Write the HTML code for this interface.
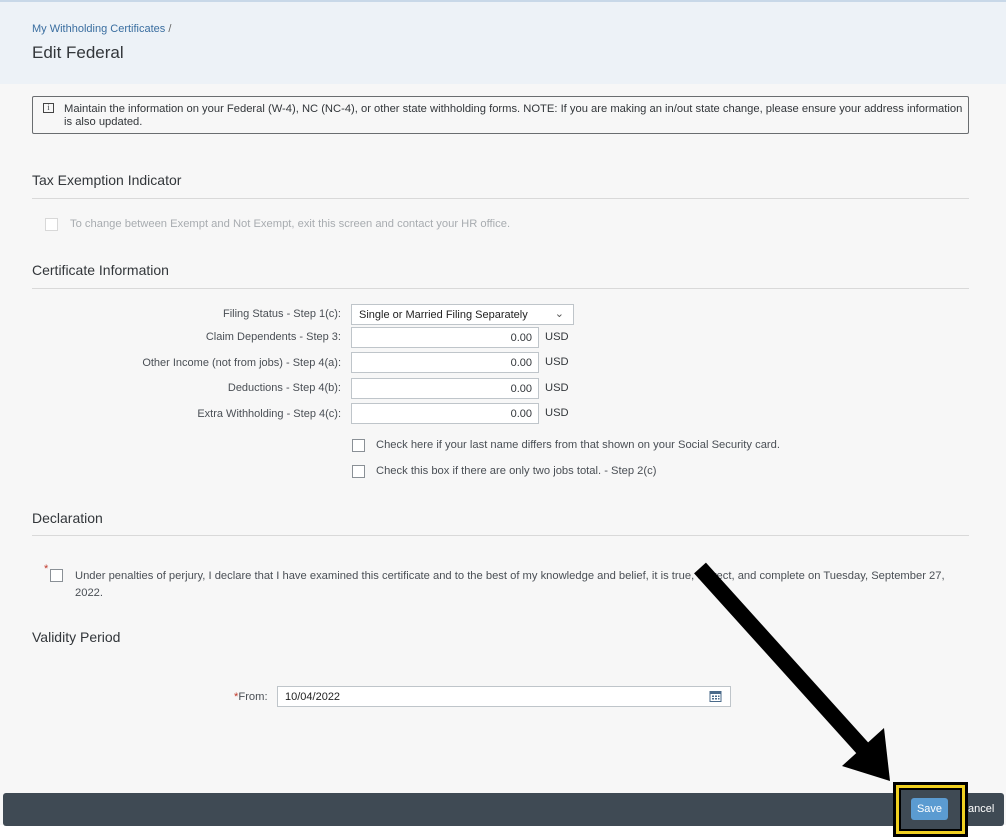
<!DOCTYPE html>
<html><head><meta charset="utf-8"><style>
*{margin:0;padding:0;box-sizing:border-box}
body{width:1006px;height:838px;background:#fff;font-family:"Liberation Sans",sans-serif;position:relative;overflow:hidden;color:#32363a}
.a{position:absolute}
.t{font-size:11.2px;color:#32363a;white-space:nowrap}
.lbl{font-size:11px;color:#4a4f55;text-align:right;width:341px;left:0;white-space:nowrap}
.inp{background:#fff;border:1px solid #bfc5ca;height:21px}
.num{font-size:11px;text-align:right;padding:4px 6px 0 0}
.cb{width:13px;height:13px;border:1px solid #8a9096;background:#fff}
.h{font-size:14px;color:#32363a}
.line{height:1px;background:#d9d9d9;left:32px;width:937px}
</style></head><body>
<div class="a" style="left:0;top:0;width:1006px;height:825px;background:#f7f7f7"></div>
<div class="a" style="left:0;top:0;width:1006px;height:84px;background:#edf2f7;border-top:2px solid #c8d8e8"></div>
<div class="a" style="left:32px;top:23px;font-size:11px;color:#3a6ea0">My Withholding Certificates <span style="color:#666">/</span></div>
<div class="a" style="left:32px;top:43px;font-size:17px;color:#32363a">Edit Federal</div>
<div class="a" style="left:32px;top:96px;width:937px;height:38px;border:1px solid #6a6d70;border-radius:2px;background:#f7f7f7"></div>
<div class="a" style="left:43px;top:103px;width:11px;height:10px;border:1px solid #444;font-size:8px;line-height:8px;text-align:center;font-family:'Liberation Serif',serif">i</div>
<div class="a t" style="left:64px;top:103px;line-height:13px">Maintain the information on your Federal (W-4), NC (NC-4), or other state withholding forms. NOTE: If you are making an in/out state change, please ensure your address information<br>is also updated.</div>
<div class="a h" style="left:32px;top:172px">Tax Exemption Indicator</div>
<div class="a line" style="top:198px"></div>
<div class="a cb" style="left:45px;top:218px;border-color:#d8d8d8"></div>
<div class="a t" style="left:70px;top:218px;color:#a8acb0">To change between Exempt and Not Exempt, exit this screen and contact your HR office.</div>
<div class="a h" style="left:32px;top:262px">Certificate Information</div>
<div class="a line" style="top:288px"></div>
<div class="a lbl" style="top:308px">Filing Status - Step 1(c):</div>
<div class="a inp" style="left:351px;top:304px;width:223px;height:21px;font-size:11px;padding:4px 0 0 7px;color:#222">Single or Married Filing Separately<span style="position:absolute;right:9px;top:2px;color:#555">&#8964;</span></div>
<div class="a lbl" style="top:331px">Claim Dependents - Step 3:</div>
<div class="a inp num" style="left:351px;top:327px;width:188px">0.00</div><div class="a t" style="left:545px;top:331px">USD</div>
<div class="a lbl" style="top:357px">Other Income (not from jobs) - Step 4(a):</div>
<div class="a inp num" style="left:351px;top:352px;width:188px">0.00</div><div class="a t" style="left:545px;top:356px">USD</div>
<div class="a lbl" style="top:382px">Deductions - Step 4(b):</div>
<div class="a inp num" style="left:351px;top:378px;width:188px">0.00</div><div class="a t" style="left:545px;top:382px">USD</div>
<div class="a lbl" style="top:408px">Extra Withholding - Step 4(c):</div>
<div class="a inp num" style="left:351px;top:403px;width:188px">0.00</div><div class="a t" style="left:545px;top:407px">USD</div>
<div class="a cb" style="left:352px;top:439px"></div><div class="a t" style="left:376px;top:439px;color:#4a4f55">Check here if your last name differs from that shown on your Social Security card.</div>
<div class="a cb" style="left:352px;top:465px"></div><div class="a t" style="left:376px;top:465px;color:#4a4f55">Check this box if there are only two jobs total. - Step 2(c)</div>
<div class="a h" style="left:32px;top:510px">Declaration</div>
<div class="a line" style="top:535px"></div>
<div class="a" style="left:44px;top:563px;color:#c0392b;font-size:11px">*</div>
<div class="a cb" style="left:50px;top:569px"></div>
<div class="a t" style="left:75px;top:568px;line-height:17px;color:#4a4f55">Under penalties of perjury, I declare that I have examined this certificate and to the best of my knowledge and belief, it is true, correct, and complete on Tuesday, September 27,<br>2022.</div>
<div class="a h" style="left:32px;top:629px">Validity Period</div>
<div class="a t" style="left:234px;top:691px;color:#4a4f55"><span style="color:#c0392b">*</span>From:</div>
<div class="a inp" style="left:277px;top:686px;width:454px;height:21px;font-size:11px;padding:4px 0 0 7px;color:#222">10/04/2022</div>
<svg class="a" style="left:709px;top:690px" width="13" height="12" viewBox="0 0 13 12"><rect x="1" y="1.5" width="11" height="10" fill="none" stroke="#4a6a8a"/><rect x="1" y="1.5" width="11" height="2.5" fill="#4a6a8a"/><g fill="#4a6a8a"><rect x="3" y="5.5" width="2" height="1.5"/><rect x="6" y="5.5" width="2" height="1.5"/><rect x="9" y="5.5" width="1.5" height="1.5"/><rect x="3" y="8" width="2" height="1.5"/><rect x="6" y="8" width="2" height="1.5"/><rect x="9" y="8" width="1.5" height="1.5"/></g></svg>
<div class="a" style="left:3px;top:793px;width:1001px;height:33px;background:#3f4a54;border-radius:3px"></div>
<div class="a" style="left:893px;top:782px;width:75px;height:55px;border:3px solid #000;background:#000"></div>
<div class="a" style="left:896px;top:785px;width:69px;height:49px;border:3px solid #f0d020;background:#3f4a54"></div>
<div class="a" style="left:899px;top:788px;width:63px;height:43px;border:2px solid #000;background:#3f4a54"></div>
<div class="a" style="left:911px;top:798px;width:37px;height:22px;background:#5b9bd1;border-radius:3px;color:#fff;font-size:11px;text-align:center;line-height:22px">Save</div>
<div class="a" style="left:968px;top:803px;color:#fff;font-size:11px">ancel</div>
<svg class="a" style="left:0;top:0" width="1006" height="838"><line x1="700" y1="568" x2="866" y2="752" stroke="#000" stroke-width="16"/><polygon points="890,781 842,766 884,728" fill="#000"/></svg>
</body></html>
